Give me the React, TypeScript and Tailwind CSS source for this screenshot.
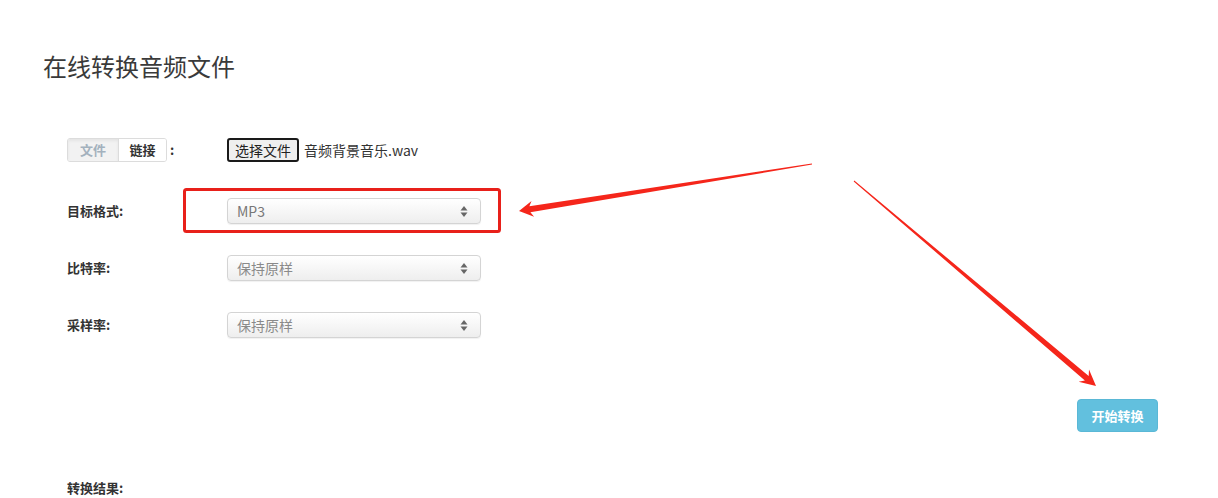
import type { ReactNode } from "react";

const font = {
	fontFamily: '"Noto Sans CJK SC", "Noto Sans", "Liberation Sans", sans-serif',
};

function SelectBox({ value, dark }: { value: string; dark?: boolean }) {
	return (
		<div className="flex h-[26px] w-[254px] items-center justify-between rounded-[4px] border border-[#d4d4d4] bg-gradient-to-b from-white to-[#eeeeee] pl-[9px] pr-[12px] shadow-[0_1px_1px_rgba(0,0,0,0.06)]">
			<span className={`text-[14px] ${dark ? "text-[#777]" : "text-[#8a8a8a]"}`}>{value}</span>
			<svg width="8" height="13" viewBox="0 0 8 13">
				<polygon points="4,1 7.5,5.5 0.5,5.5" fill="#666" />
				<polygon points="0.5,7.5 7.5,7.5 4,12" fill="#666" />
			</svg>
		</div>
	);
}

function Row({ label, children }: { label: ReactNode; children: ReactNode }) {
	return (
		<div className="flex h-[26px] items-center">
			<div className="w-[160px] text-[13px] font-bold text-[#333]">{label}</div>
			{children}
		</div>
	);
}

function Arrows() {
	return (
		<svg
			className="pointer-events-none absolute left-0 top-0"
			width="1218"
			height="498"
			viewBox="0 0 1218 498"
		>
			<polygon
				fill="#f5261b"
				points="811.9,163.5 529.4,206.3 531.5,200.9 519,211 534.1,216.7 530.4,212.3 812.1,164.5"
			/>
			<polygon
				fill="#f5261b"
				points="853.7,181.4 1084.9,380.5 1078.6,381.8 1096,386 1089,369.6 1088.7,375.9 854.3,180.6"
			/>
			<rect x="184.5" y="189.5" width="315" height="42" rx="2" fill="none" stroke="#e8201a" strokeWidth="3" />
		</svg>
	);
}

export default function App() {
	return (
		<div className="relative h-[498px] w-[1218px] overflow-hidden bg-white" style={font}>
			<h1 className="pl-[43px] pt-[49px] text-[24px] font-normal leading-[34px] text-[#3a3a3a]">
				在线转换音频文件
			</h1>

			<div className="pl-[67px] pt-[54px]">
				<div className="flex h-[26px] items-center">
					<div className="flex w-[160px] items-center">
						<div className="flex h-[24px] overflow-hidden rounded-[3px] border border-[#dcdcdc] text-[13px] font-bold">
							<span className="flex w-[50px] items-center justify-center bg-[#f2f2f2] text-[#a3b1bd] shadow-[inset_0_2px_3px_rgba(0,0,0,0.06)]">
								文件
							</span>
							<span className="flex w-[48px] items-center justify-center border-l border-[#dcdcdc] bg-white text-[#333]">
								链接
							</span>
						</div>
						<span className="ml-[3px] text-[13px] font-bold text-[#333]">:</span>
					</div>
					<button
						type="button"
						className="h-[24px] rounded-[3px] border-2 border-[#1a1a1a] bg-[#efefef] px-[6px] text-[14px] leading-none text-[#222]"
					>
						选择文件
					</button>
					<span className="ml-[5px] text-[14px] text-[#333]">音频背景音乐.wav</span>
				</div>

				<div className="mt-[35px] flex flex-col gap-[31px]">
					<Row label="目标格式:">
						<SelectBox value="MP3" dark />
					</Row>
					<Row label="比特率:">
						<SelectBox value="保持原样" />
					</Row>
					<Row label="采样率:">
						<SelectBox value="保持原样" />
					</Row>
				</div>

				<div className="mt-[61px] flex justify-end pr-[60px]">
					<button
						type="button"
						className="h-[33px] w-[81px] rounded-[4px] border border-[#5ab8d6] bg-[#62c0de] text-[13px] font-bold text-white"
					>
						开始转换
					</button>
				</div>

				<div className="mt-[46px] text-[13px] font-bold text-[#333]">转换结果:</div>
			</div>

			<Arrows />
		</div>
	);
}
